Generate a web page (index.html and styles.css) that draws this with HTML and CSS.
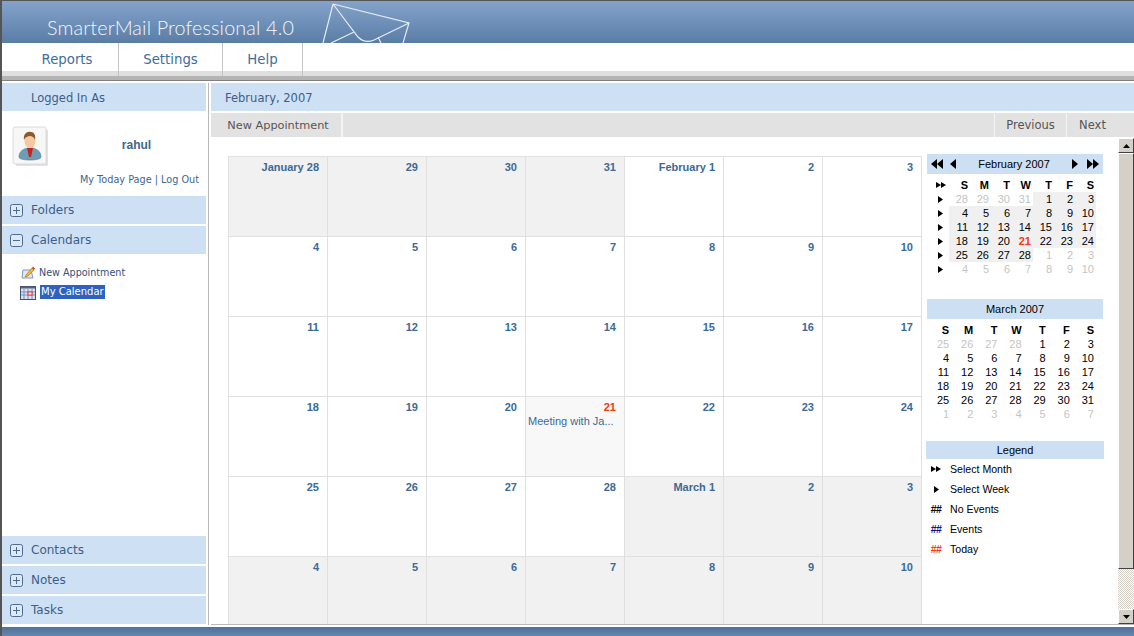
FILE: index.html
```html
<!DOCTYPE html>
<html lang="en">
<head>
<meta charset="utf-8">
<title>SmarterMail Professional 4.0</title>
<link rel="stylesheet" href="styles.css">
</head>
<body>
<svg class="defs" width="0" height="0">
  <symbol id="r1" viewBox="0 0 6 8" preserveAspectRatio="none"><polygon points="0,0 6,4 0,8"/></symbol>
  <symbol id="l1" viewBox="0 0 6 8" preserveAspectRatio="none"><polygon points="6,0 0,4 6,8"/></symbol>
  <symbol id="plus" viewBox="0 0 13 13"><rect x=".5" y=".5" width="12" height="12" rx="2" fill="#dfe9f6" stroke="#4a6d98"/><path d="M3 6.500h7M6.500 3v7" stroke="#4a6d98" fill="none"/></symbol>
  <symbol id="minus" viewBox="0 0 13 13"><rect x=".5" y=".5" width="12" height="12" rx="2" fill="#dfe9f6" stroke="#4a6d98"/><path d="M3 6.500h7" stroke="#4a6d98" fill="none"/></symbol>
</svg>
<div class="app">
  <header class="top">
    <h1 class="brand">SmarterMail Professional 4.0</h1>
    <svg class="envelope" width="92" height="42" viewBox="0 0 92 42"><path d="M11 3 87 22 81 42M11 3 1 42M11 3 36 36Q43 43 52 39L87 22M9 42 32 31M56 36 59 42" fill="none" stroke="#e4ecf5" stroke-width="1.2"/></svg>
  </header>
  <nav class="nav">
    <a class="nav-item w1">Reports</a>
    <a class="nav-item w2">Settings</a>
    <a class="nav-item w3">Help</a>
  </nav>
  <div class="rule"></div>
  <div class="body">
    <aside class="side">
      <div class="bar first">Logged In As</div>
      <div class="user">
        <div class="user-row">
          <svg class="avatar" width="36" height="40" viewBox="0 0 36 40">
            <rect x="1" y="1" width="33" height="37" rx="2" fill="#f7f7f5" stroke="#dcdcdc"/>
            <path d="M35 4v35H4" fill="none" stroke="#c8c8c8"/>
            <path d="M7 31c0-6 5-9 11-9s11 3 11 9c0 2-5 3-11 3s-11-1-11-3z" fill="#6d9db5" stroke="#4d7a92" stroke-width=".6"/>
            <path d="M15 22h6l-2 9h-2z" fill="#c8201c"/>
            <ellipse cx="18" cy="15" rx="5.500" ry="7" fill="#f6c9a0"/>
            <path d="M12 14c-1-6 3-9 7-8 3 0 5 3 4 8-1-3-3-4-5-4s-5 1-6 4z" fill="#8a5a2c"/>
          </svg>
          <strong class="user-name">rahul</strong>
        </div>
        <p class="user-links">My Today Page | Log Out</p>
      </div>
      <div class="bar tree-bar"><svg class="tog" width="13" height="13"><use href="#plus"/></svg>Folders</div>
      <div class="bar tree-bar"><svg class="tog" width="13" height="13"><use href="#minus"/></svg>Calendars</div>
      <ul class="tree">
        <li class="tree-item">
          <svg class="tree-ico" width="16" height="16" viewBox="0 0 16 16"><path d="M3 5h8l2 8H2z" fill="#dfe8f4" stroke="#8298b8"/><path d="M6 10 12 3l2 2-6 6-3 1z" fill="#f2b632" stroke="#b8741a" stroke-width=".7"/><path d="M12 3l1-1.500 2 2-1 1.500z" fill="#d83a2a"/></svg>
          <span>New Appointment</span>
        </li>
        <li class="tree-item">
          <svg class="tree-ico" width="16" height="16" viewBox="0 0 16 16"><rect x=".5" y="2.500" width="15" height="13" fill="#d8e2f4" stroke="#44506a"/><path d="M.5 2.500h15v2H.5z" fill="#55617c"/><path d="M4 5v10M8 5v10M12 5v10M1 8h14M1 11h14" stroke="#7b8fc0" fill="none"/><rect x="8" y="8" width="4" height="3" fill="#fff" stroke="#e0362a"/></svg>
          <span class="selected">My Calendar</span>
        </li>
      </ul>
      <div class="bar tree-bar push"><svg class="tog" width="13" height="13"><use href="#plus"/></svg>Contacts</div>
      <div class="bar tree-bar"><svg class="tog" width="13" height="13"><use href="#plus"/></svg>Notes</div>
      <div class="bar tree-bar"><svg class="tog" width="13" height="13"><use href="#plus"/></svg>Tasks</div>
    </aside>
    <main class="main">
      <div class="bar title">February, 2007</div>
      <div class="toolbar">
        <a class="tool new">New Appointment</a>
        <a class="tool prev">Previous</a>
        <a class="tool next">Next</a>
      </div>
      <div class="scroll">
        <div class="content">
          <section class="month">
            <div class="cell out"><b>January 28</b></div><div class="cell out"><b>29</b></div><div class="cell out"><b>30</b></div><div class="cell out"><b>31</b></div><div class="cell"><b>February 1</b></div><div class="cell"><b>2</b></div><div class="cell"><b>3</b></div>
            <div class="cell"><b>4</b></div><div class="cell"><b>5</b></div><div class="cell"><b>6</b></div><div class="cell"><b>7</b></div><div class="cell"><b>8</b></div><div class="cell"><b>9</b></div><div class="cell"><b>10</b></div>
            <div class="cell"><b>11</b></div><div class="cell"><b>12</b></div><div class="cell"><b>13</b></div><div class="cell"><b>14</b></div><div class="cell"><b>15</b></div><div class="cell"><b>16</b></div><div class="cell"><b>17</b></div>
            <div class="cell"><b>18</b></div><div class="cell"><b>19</b></div><div class="cell"><b>20</b></div><div class="cell today"><b>21</b><span class="event">Meeting with Ja...</span></div><div class="cell"><b>22</b></div><div class="cell"><b>23</b></div><div class="cell"><b>24</b></div>
            <div class="cell"><b>25</b></div><div class="cell"><b>26</b></div><div class="cell"><b>27</b></div><div class="cell"><b>28</b></div><div class="cell out"><b>March 1</b></div><div class="cell out"><b>2</b></div><div class="cell out"><b>3</b></div>
            <div class="cell out"><b>4</b></div><div class="cell out"><b>5</b></div><div class="cell out"><b>6</b></div><div class="cell out"><b>7</b></div><div class="cell out"><b>8</b></div><div class="cell out"><b>9</b></div><div class="cell out"><b>10</b></div>
          </section>
          <aside class="rail">
            <div class="mini-head">
              <span class="arrows"><svg width="6" height="10"><use href="#l1" width="6" height="10"/></svg><svg width="6" height="10"><use href="#l1" width="6" height="10"/></svg></span>
              <span class="arrows a2"><svg width="6" height="10"><use href="#l1" width="6" height="10"/></svg></span>
              <span class="mini-title">February 2007</span>
              <span class="arrows a3"><svg width="6" height="10"><use href="#r1" width="6" height="10"/></svg></span>
              <span class="arrows"><svg width="6" height="10"><use href="#r1" width="6" height="10"/></svg><svg width="6" height="10"><use href="#r1" width="6" height="10"/></svg></span>
            </div>
            <div class="feb">
              <ul class="weeks">
                <li class="dbl"><svg width="5" height="6"><use href="#r1" width="5" height="6"/></svg><svg width="5" height="6"><use href="#r1" width="5" height="6"/></svg></li>
                <li><svg width="5" height="7"><use href="#r1" width="5" height="7"/></svg></li>
                <li><svg width="5" height="7"><use href="#r1" width="5" height="7"/></svg></li>
                <li><svg width="5" height="7"><use href="#r1" width="5" height="7"/></svg></li>
                <li><svg width="5" height="7"><use href="#r1" width="5" height="7"/></svg></li>
                <li><svg width="5" height="7"><use href="#r1" width="5" height="7"/></svg></li>
                <li><svg width="5" height="7"><use href="#r1" width="5" height="7"/></svg></li>
              </ul>
              <div class="days">
                <b>S</b><b>M</b><b>T</b><b>W</b><b>T</b><b>F</b><b>S</b>
                <i>28</i><i>29</i><i>30</i><i>31</i><span class="hi">1</span><span class="hi">2</span><span class="hi">3</span>
                <span class="hi">4</span><span class="hi">5</span><span class="hi">6</span><span class="hi">7</span><span class="hi">8</span><span class="hi">9</span><span class="hi">10</span>
                <span class="hi">11</span><span class="hi">12</span><span class="hi">13</span><span class="hi">14</span><span class="hi">15</span><span class="hi">16</span><span class="hi">17</span>
                <span class="hi">18</span><span class="hi">19</span><span class="hi">20</span><span class="hi now">21</span><span class="hi">22</span><span class="hi">23</span><span class="hi">24</span>
                <span class="hi">25</span><span class="hi">26</span><span class="hi">27</span><span class="hi">28</span><i>1</i><i>2</i><i>3</i>
                <i>4</i><i>5</i><i>6</i><i>7</i><i>8</i><i>9</i><i>10</i>
              </div>
            </div>
            <div class="mini-head march">March 2007</div>
            <div class="days wide">
              <b>S</b><b>M</b><b>T</b><b>W</b><b>T</b><b>F</b><b>S</b>
              <i>25</i><i>26</i><i>27</i><i>28</i><span>1</span><span>2</span><span>3</span>
              <span>4</span><span>5</span><span>6</span><span>7</span><span>8</span><span>9</span><span>10</span>
              <span>11</span><span>12</span><span>13</span><span>14</span><span>15</span><span>16</span><span>17</span>
              <span>18</span><span>19</span><span>20</span><span>21</span><span>22</span><span>23</span><span>24</span>
              <span>25</span><span>26</span><span>27</span><span>28</span><span>29</span><span>30</span><span>31</span>
              <i>1</i><i>2</i><i>3</i><i>4</i><i>5</i><i>6</i><i>7</i>
            </div>
            <div class="legend-head">Legend</div>
            <ul class="legend">
              <li><span class="key"><svg width="5" height="6"><use href="#r1" width="5" height="6"/></svg><svg width="5" height="6"><use href="#r1" width="5" height="6"/></svg></span>Select Month</li>
              <li><span class="key"><svg width="5" height="7"><use href="#r1" width="5" height="7"/></svg></span>Select Week</li>
              <li><span class="key hash">##</span>No Events</li>
              <li><span class="key hash blue">##</span>Events</li>
              <li><span class="key hash red">##</span>Today</li>
            </ul>
          </aside>
        </div>
        <div class="scrollbar">
          <div class="sb-btn"><svg width="7" height="4" viewBox="0 0 7 4"><polygon points="3.500,0 7,4 0,4"/></svg></div>
          <div class="sb-thumb"></div>
          <div class="sb-track"></div>
          <div class="sb-btn"><svg width="7" height="4" viewBox="0 0 7 4"><polygon points="0,0 7,0 3.500,4"/></svg></div>
        </div>
      </div>
    </main>
  </div>
  <footer class="foot"></footer>
</div>
</body>
</html>
```

FILE: styles.css
```css
* { box-sizing: border-box; }
html, body { margin: 0; padding: 0; background: #fff; }
body { font-family: "DejaVu Sans", sans-serif; overflow: hidden; }
ul { list-style: none; margin: 0; padding: 0; }
.defs { position: absolute; }
.app {
  width: 1134px; height: 636px; overflow: hidden;
  display: flex; flex-direction: column;
  border-left: 2px solid #555; background: #fff;
}
.top {
  height: 43px; flex: none; display: flex; align-items: flex-end;
  border-top: 1px solid #555;
  background: linear-gradient(#84a3ca, #5a7da6);
  overflow: hidden;
}
.brand {
  margin: 0 0 2px 45px; width: 275px;
  font: 300 19.750px/26px Lato, sans-serif; color: #f4f7fb; letter-spacing: .15px; white-space: nowrap;
}
.envelope { flex: none; }
.nav { height: 33px; flex: none; display: flex; background: linear-gradient(#fff 28px, #dfdfdf 28px); }
.nav-item {
  display: flex; justify-content: center; padding-top: 8px;
  font-size: 13.300px; line-height: 18px; color: #3f6d9a;
  border-right: 1px solid #c4c4c4;
}
.w1 { width: 117px; padding-left: 14px; }
.w2 { width: 104px; }
.w3 { width: 80px; }
.rule { height: 5px; flex: none; background: #b4b4b4; border-bottom: 1px solid #808080; }
.body { flex: 1; min-height: 0; display: flex; padding-top: 2px; }
.side { width: 207px; flex: none; display: flex; flex-direction: column; border-right: 1px solid #b8b8b8; padding-right: 2px; }
.bar {
  height: 28px; flex: none; display: flex; align-items: center;
  background: #cee0f4; color: #3c5f88; font-size: 12px;
}
.first { padding: 2px 0 0 29px; font-size: 11.500px; }
.user { height: 85px; flex: none; padding: 15px 7px 0 10px; }
.user-row { display: flex; align-items: center; height: 40px; }
.user-name { flex: 1; text-align: center; font: bold 12px "Liberation Sans", sans-serif; color: #3c6690; padding: 0 0 0 26px; margin-bottom: 2px; }
.user-links { margin: 7px 0 0; text-align: right; font-size: 9.700px; line-height: 14px; color: #3c6690; white-space: nowrap; }
.tree-bar { margin-bottom: 2px; padding-left: 8px; }
.tree-bar:last-child { margin-bottom: 1px; }
.tog { margin-right: 8px; }
.tree { padding: 7px 0 0 18px; }
.tree-item { display: flex; align-items: center; height: 19px; font-size: 9.600px; color: #34507a; }
.tree-ico { margin-right: 3px; flex: none; }
.selected { background: #2d62c0; color: #fff; margin-left: 1px; padding: 1px; font-size: 10px; line-height: 12px; }
.push { margin-top: auto; }
.main { flex: 1; min-width: 0; display: flex; flex-direction: column; padding-left: 2px; }
.title { padding: 2px 0 0 14px; font-size: 11.500px; }
.toolbar { height: 24px; flex: none; margin-top: 2px; display: flex; background: #e2e2e2; }
.tool { display: flex; align-items: center; justify-content: center; font-size: 11.500px; color: #555; }
.new { width: 132px; padding-left: 4px; font-size: 11.300px; border-right: 2px solid #f4f4f4; margin-right: auto; }
.prev { width: 72px; border-left: 1px solid #f4f4f4; }
.next { width: 68px; padding-right: 16px; border-left: 1px solid #f4f4f4; }
.scroll { flex: 1; min-height: 0; display: flex; overflow: hidden; border-bottom: 1px solid #b8b8b8; }
.content { width: 906px; flex: none; display: flex; padding: 17px 0 0 17px; }
.month {
  width: 694px; flex: none; margin-top: 2px;
  display: grid; grid-template-columns: repeat(7, 99px); grid-auto-rows: 80px; align-content: start;
  border-left: 1px solid #e0e0e0; border-top: 1px solid #e0e0e0;
  font-family: "Liberation Sans", sans-serif; font-size: 11px; line-height: 13px; color: #3c6a96;
}
.cell { border-right: 1px solid #e0e0e0; border-bottom: 1px solid #e0e0e0; padding: 4px 8px 0 2px; text-align: right; }
.cell b { display: block; }
.out { background: #f1f1f1; }
.today { background: #f8f8f8; }
.today b { color: #f03a14; }
.event { display: block; text-align: left; margin-top: 1px; padding-left: 0; white-space: nowrap; }
.rail { width: 183px; flex: none; padding-left: 4px; font-family: "Liberation Sans", sans-serif; font-size: 11px; color: #000; }
.mini-head {
  margin: 0 1px; width: 176px; height: 20px; display: flex; align-items: center;
  background: #cddff2; padding: 0 4px; 
}
.mini-title { flex: 1; text-align: center; padding-left: 0; }
.arrows { display: flex; }
.arrows svg { display: block; }
.a2 { margin-left: 7px; }
.a3 { margin-right: 9px; }
.feb { display: flex; margin: 4px 0 0 1px; }
.weeks { width: 22px; flex: none; }
.weeks li { height: 14px; display: flex; align-items: center; padding-left: 11px; }
.weeks .dbl { padding-left: 9px; }
.weeks svg { display: block; }
.days { display: grid; grid-template-columns: repeat(7, 21px); grid-auto-rows: 14px; line-height: 14px; text-align: right; }
.days > * { padding-right: 2px; font-style: normal; }
.days i { color: #c4c4c4; }
.days .hi { background: #f0f0f0; }
.days .now { color: #f03a14; font-weight: bold; }
.march { justify-content: center; margin-top: 23px; }
.wide { grid-template-columns: repeat(7, 1fr); width: 169px; margin: 4px 0 0 1px; }
.legend-head { width: 178px; height: 18px; margin-top: 20px; background: #cddff2; text-align: center; line-height: 18px; }
.legend { padding: 0; font-size: 10.600px; }
.legend li { height: 20px; display: flex; align-items: center; }
.key { width: 24px; flex: none; display: flex; justify-content: center; padding-right: 4px; }
.hash { font-weight: bold; letter-spacing: -.5px; font-size: 10.500px; }
.blue { color: #101090; }
.red { color: #f03a14; }
.scrollbar { width: 16px; flex: none; margin-left: 1px; display: flex; flex-direction: column; padding-top: 1px; }
.sb-btn {
  height: 15px; flex: none; display: flex; align-items: center; justify-content: center;
  background: #d4d0c8; border: 1px solid; border-color: #fff #404040 #404040 #fff;
}
.sb-btn svg { display: block; }
.sb-thumb {
  height: 416px; flex: none; background: #d4d0c8; border: 1px solid; border-color: #fff #404040 #404040 #fff;
}
.sb-track { flex: 1; background: conic-gradient(#d4d0c8 25%, #fff 0 50%, #d4d0c8 0 75%, #fff 0) 0 0 / 2px 2px; }
.foot { height: 11px; flex: none; border-top: 2px solid #fff; background: linear-gradient(#4f719b, #6585aa); }
```
